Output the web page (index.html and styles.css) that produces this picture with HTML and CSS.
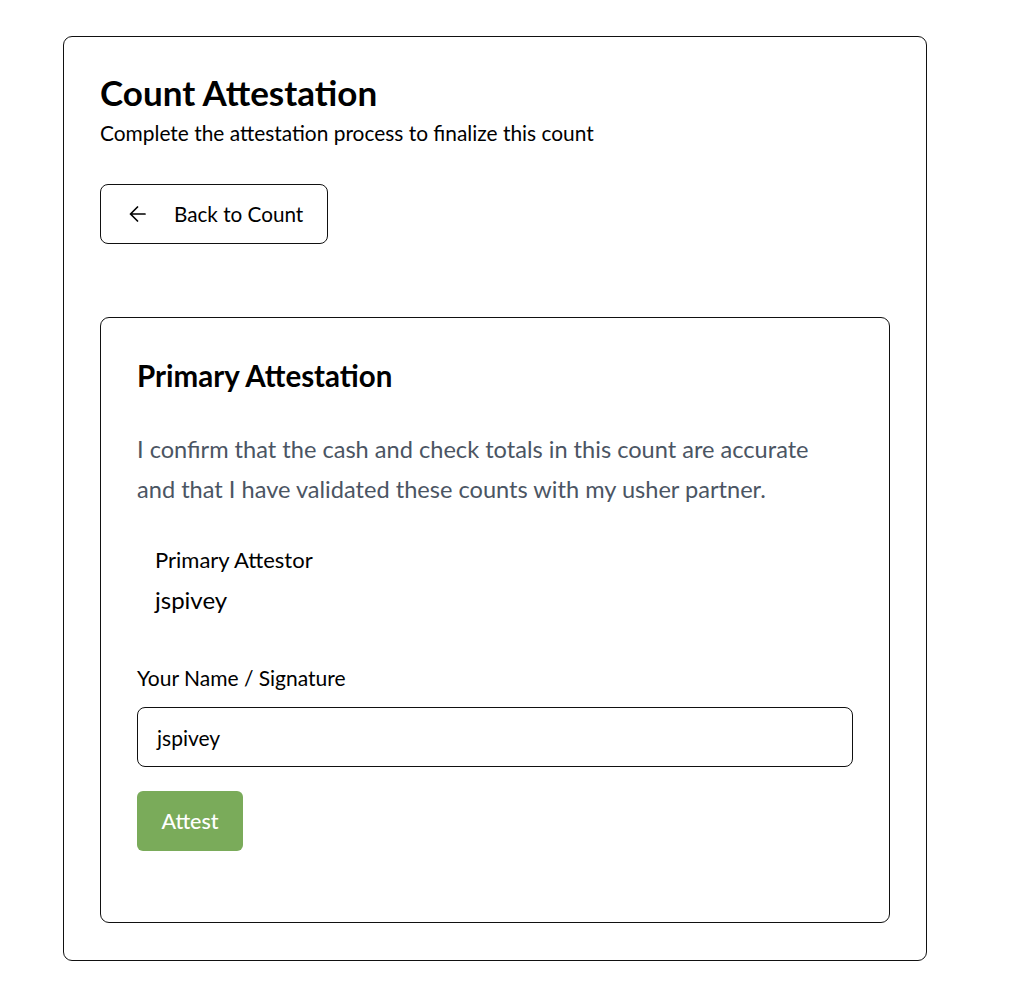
FILE: index.html
```html
<!DOCTYPE html>
<html>
<head>
<meta charset="utf-8">
<link rel="stylesheet" href="styles.css">
</head>
<body>
<div class="page">
  <div class="card">
    <h1 class="title">Count Attestation</h1>
    <p class="subtitle">Complete the attestation process to finalize this count</p>
    <button class="back-btn">
      <svg class="arrow" width="17" height="16" viewBox="0 0 17 16" fill="none" stroke="#000" stroke-width="1.7" stroke-linecap="round" stroke-linejoin="round"><path d="M16 8H1.5M8.5 1L1.5 8L8.5 15"/></svg>
      <span>Back to Count</span>
    </button>
    <div class="inner">
      <h2 class="inner-title">Primary Attestation</h2>
      <p class="statement">I confirm that the cash and check totals in this count are accurate and that I have validated these counts with my usher partner.</p>
      <div class="attestor">
        <div class="attestor-label">Primary Attestor</div>
        <div class="attestor-name">jspivey</div>
      </div>
      <label class="field-label">Your Name / Signature</label>
      <div class="input">jspivey</div>
      <button class="attest-btn">Attest</button>
    </div>
  </div>
</div>
</body>
</html>
```

FILE: styles.css
```css
* { box-sizing: border-box; }
body {
  margin: 0;
  background: #fff;
  font-family: Lato, "Open Sans", sans-serif;
  color: #000;
}
.page {
  padding: 36px 0 0 63px;
}
.card {
  width: 864px;
  height: 925px;
  border: 1px solid #111;
  border-radius: 9px;
  padding: 36px 36px 0 36px;
}
.title {
  margin: 0;
  font-size: 35px;
  font-weight: 700;
  line-height: 38px;
}
.subtitle {
  margin: 9px 0 0;
  font-size: 20.9px;
  line-height: 26px;
}
.back-btn {
  margin-top: 38px;
  width: 228px;
  height: 60px;
  border: 1px solid #111;
  border-radius: 8px;
  background: #fff;
  display: flex;
  align-items: center;
  padding: 0 0 0 28px;
  font-family: inherit;
  font-size: 20.7px;
  color: #000;
  gap: 28px;
}
.arrow { flex: none; }
.inner {
  margin-top: 73px;
  width: 790px;
  height: 606px;
  border: 1px solid #111;
  border-radius: 9px;
  padding: 36px 36px 0 36px;
}
.inner-title {
  margin: 0;
  font-size: 29.5px;
  font-weight: 700;
  line-height: 44px;
}
.statement {
  margin: 31px 0 0;
  font-size: 23.6px;
  line-height: 40px;
  color: #4b5563;
  max-width: 700px;
}
.attestor {
  margin-top: 37px;
  padding-left: 18px;
}
.attestor-label {
  font-size: 22px;
  line-height: 28px;
}
.attestor-name {
  margin-top: 11px;
  font-size: 24px;
  line-height: 30px;
}
.field-label {
  display: block;
  margin-top: 49px;
  font-size: 21px;
  line-height: 28px;
}
.input {
  margin-top: 15px;
  width: 716px;
  height: 60px;
  border: 1px solid #111;
  border-radius: 8px;
  padding: 0 19px;
  display: flex;
  align-items: center;
  font-size: 21px;
}
.attest-btn {
  display: block;
  margin-top: 24px;
  width: 106px;
  height: 60px;
  border: none;
  border-radius: 6px;
  background: #7aab5a;
  color: #fff;
  font-family: inherit;
  font-size: 21.5px;
  font-weight: 500;
}
```
